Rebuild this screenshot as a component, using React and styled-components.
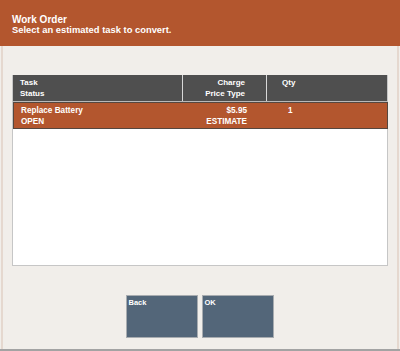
import React from "react";
import styled, { createGlobalStyle } from "styled-components";

const GlobalStyle = createGlobalStyle`
  html, body {
    margin: 0;
    padding: 0;
    background: #f1eeea;
  }
  * {
    box-sizing: border-box;
  }
`;

const Page = styled.div`
  width: 400px;
  height: 351px;
  display: flex;
  flex-direction: column;
  background: #f1eeea;
  border-bottom: 2px solid #a3a3a3;
  font-family: "Liberation Sans", Arial, sans-serif;
  font-weight: bold;
  color: #ffffff;
`;

const Header = styled.header`
  height: 46px;
  background: #b3562e;
  padding: 15px 12px 0;
`;

const Title = styled.div`
  font-size: 10px;
  line-height: 10px;
`;

const Subtitle = styled.div`
  font-size: 9.4px;
  line-height: 9px;
`;

const Content = styled.main`
  flex: 1;
  margin: 0 1px;
  border-left: 2px solid #e5d8cf;
  border-right: 2px solid #e5d8cf;
  padding: 29px 0 0 9px;
  display: flex;
  flex-direction: column;
`;

const Table = styled.div`
  width: 376px;
  height: 191px;
  background: #ffffff;
  border: 1px solid #c6c6c6;
  border-top: none;
`;

const HeadRow = styled.div`
  display: grid;
  grid-template-columns: 170px 84px 1fr;
  height: 27px;
  background: #4f4f4f;
  border-bottom: 1px solid #b9b9b9;
`;

const Row = styled.div`
  display: grid;
  grid-template-columns: 170px 84px 1fr;
  height: 27px;
  background: #b3562e;
  border: 1px solid #55473f;
  margin-right: -1px;
`;

const Cell = styled.div`
  font-size: ${(p) => (p.$row ? "8.2px" : "8px")};
  line-height: 11px;
  padding: 2px ${(p) => p.$pr || 0}px 0 ${(p) => p.$pl || 0}px;
  text-align: ${(p) => (p.$right ? "right" : "left")};
  border-right: ${(p) => (p.$divider ? "1px solid #d8d8d8" : "none")};
`;

const Buttons = styled.div`
  display: flex;
  justify-content: center;
  gap: 4px;
  margin-top: 29px;
  margin-left: -10px;
`;

const Button = styled.button`
  width: 72px;
  height: 43px;
  background: #536679;
  border: 1px solid #a8acb0;
  color: #ffffff;
  font-family: inherit;
  font-weight: bold;
  font-size: 7.5px;
  text-align: left;
  padding: 2px 2px;
  display: flex;
  align-items: flex-start;
  cursor: pointer;
`;

function Lines({ top, bottom }) {
  return (
    <>
      <div>{top}</div>
      <div>{bottom}</div>
    </>
  );
}

export default function App() {
  return (
    <Page>
      <GlobalStyle />
      <Header>
        <Title>Work Order</Title>
        <Subtitle>Select an estimated task to convert.</Subtitle>
      </Header>
      <Content>
        <Table>
          <HeadRow>
            <Cell $pl={7} $divider>
              <Lines top="Task" bottom="Status" />
            </Cell>
            <Cell $right $pr={21} $divider>
              <Lines top="Charge" bottom="Price Type" />
            </Cell>
            <Cell $pl={15}>Qty</Cell>
          </HeadRow>
          <Row>
            <Cell $row $pl={7}>
              <Lines top="Replace Battery" bottom="OPEN" />
            </Cell>
            <Cell $row $right $pr={21}>
              <Lines top="$5.95" bottom="ESTIMATE" />
            </Cell>
            <Cell $row $pl={20}>1</Cell>
          </Row>
        </Table>
        <Buttons>
          <Button>Back</Button>
          <Button>OK</Button>
        </Buttons>
      </Content>
    </Page>
  );
}
